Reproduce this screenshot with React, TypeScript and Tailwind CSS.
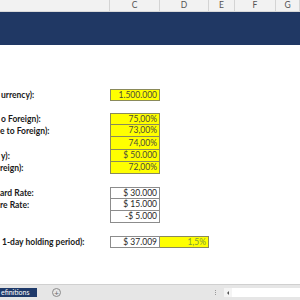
import React from 'react';

type Cell = { v: string; yellow?: boolean; top?: boolean; green?: boolean };
type Row = { h: number; label?: string; lx?: number; c?: Cell; d?: Cell };

const rows: Row[] = [
  { h: 12, label: 'urrency):', lx: 1, c: { v: '1.500.000', yellow: true, top: true } },
  { h: 12 },
  { h: 12, label: 'o Foreign):', lx: 1, c: { v: '75,00%', yellow: true, top: true } },
  { h: 12, label: 'e to Foreign):', lx: 0, c: { v: '73,00%', yellow: true } },
  { h: 13, c: { v: '74,00%', yellow: true } },
  { h: 12, label: 'y):', lx: 1, c: { v: '$ 50.000', yellow: true } },
  { h: 12, label: 'reign):', lx: 0, c: { v: '72,00%', yellow: true } },
  { h: 13 },
  { h: 12, label: 'ard Rate:', lx: 0, c: { v: '$ 30.000', top: true } },
  { h: 12, label: 're Rate:', lx: 0, c: { v: '$ 15.000' } },
  { h: 12, c: { v: '-$ 5.000' } },
  { h: 13 },
  { h: 12, label: '1-day holding period):', lx: 2, c: { v: '$ 37.009', top: true }, d: { v: '1,5%', yellow: true, top: true, green: true } },
];

const cols = [
  { w: 'w-[110px]', l: '' },
  { w: 'w-[50px]', l: 'C' },
  { w: 'w-[49px]', l: 'D' },
  { w: 'w-[26px]', l: 'E' },
  { w: 'w-[41px]', l: 'F' },
  { w: 'flex-1', l: 'G' },
];

function DataCell({ cell, first }: { cell?: Cell; first?: boolean }) {
  if (!cell) return <div className={first ? 'w-[50px]' : 'w-[49px]'} />;
  return (
    <div
      className={`${first ? 'w-[50px] border-l' : 'w-[49px]'} border-r border-b ${cell.top ? 'border-t' : ''} ${
        cell.yellow ? 'bg-[#ffff00] border-[#8a8a5a]' : 'bg-white border-[#8c8c8c]'
      } flex items-center justify-end pr-[2px] text-[8.5px] leading-none ${
        cell.green ? 'text-[#7c9a3c]' : cell.yellow ? 'text-[#4a4a3a]' : 'text-[#262626]'
      }`}
    >
      {cell.v}
    </div>
  );
}

export default function App() {
  return (
    <div className="w-[300px] h-[300px] overflow-hidden bg-white flex flex-col" style={{ fontFamily: 'Lato, "Open Sans", sans-serif' }}>
      {/* column headers */}
      <div className="h-[12px] flex bg-[#f2f2f2] border-b border-[#d9d9d9]">
        {cols.map((c, i) => (
          <div key={i} className={`${c.w} border-r border-[#d4d4d4] flex items-center justify-center text-[8.5px] text-[#555] leading-none`}>
            {c.l}
          </div>
        ))}
      </div>

      {/* title band */}
      <div className="h-[33px] bg-[#203864]" />

      {/* sheet body */}
      <div className="flex-1 flex flex-col pt-[44px]">
        {rows.map((r, i) => (
          <div key={i} className="flex" style={{ height: r.h }}>
            <div className="w-[110px] flex items-center">
              {r.label && (
                <span className="font-bold text-[8.5px] leading-none text-[#1a1a1a] whitespace-nowrap" style={{ marginLeft: r.lx }}>
                  {r.label}
                </span>
              )}
            </div>
            {r.c ? <DataCell cell={r.c} first /> : <div className="w-[50px]" />}
            {r.d ? <DataCell cell={r.d} /> : <div className="w-[49px]" />}
          </div>
        ))}
      </div>

      {/* sheet tabs bar */}
      <div className="h-[16px] bg-[#e6e6e6] border-t border-[#d0d0d0] flex items-center">
        <div className="h-[9px] w-[37px] bg-[#1f3a6a] flex items-center">
          <span className="text-[7px] text-white leading-none whitespace-nowrap ml-[1px]">efinitions</span>
        </div>
        <div className="ml-[15px] w-[9px] h-[9px] rounded-full border border-[#8a8a8a] flex items-center justify-center text-[8px] text-[#6a6a6a] leading-none">
          +
        </div>
        <div className="ml-[154px] flex flex-col gap-[1px]">
          <div className="w-[1px] h-[1px] bg-[#9a9a9a]" />
          <div className="w-[1px] h-[1px] bg-[#9a9a9a]" />
          <div className="w-[1px] h-[1px] bg-[#9a9a9a]" />
        </div>
        <div className="ml-[8px] w-[8px] h-[9px] bg-[#f4f4f4] flex items-center justify-center">
          <div className="w-0 h-0 border-y-[2px] border-y-transparent border-r-[2px] border-r-[#555]" />
        </div>
        <div className="flex-1 h-[9px] bg-white" />
      </div>
    </div>
  );
}
